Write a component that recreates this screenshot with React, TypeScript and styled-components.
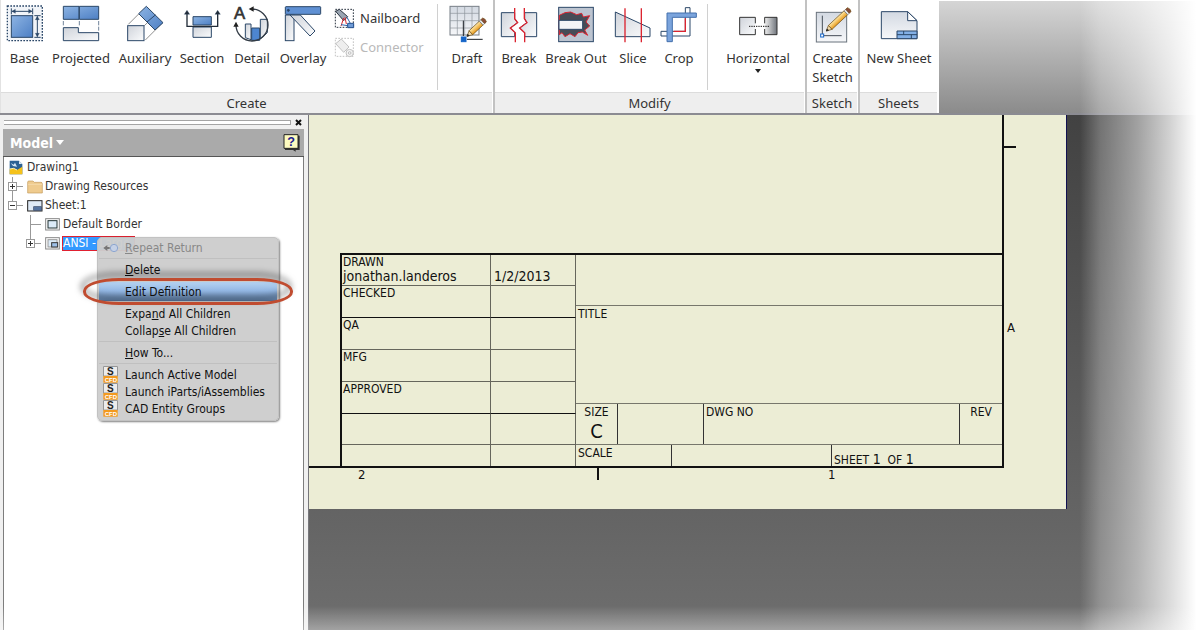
import React from 'react';
import styled, { createGlobalStyle } from 'styled-components';

const GlobalStyle = createGlobalStyle`
  *, *::before, *::after { box-sizing: border-box; }
  body { margin: 0; background: #fff; font-family: "Noto Sans", "Open Sans", sans-serif; color: #333; }
  button { font: inherit; color: inherit; background: none; border: 0; padding: 0; cursor: pointer; }
  svg { display: block; }
  ul { list-style: none; margin: 0; padding: 0; }
`;

const uiFont = '"DejaVu Sans Condensed", "Noto Sans", sans-serif';
const navy = '#2b4768';

/* ---------- page ---------- */

const Page = styled.div`
  position: relative;
  display: flex;
  flex-direction: column;
  min-height: 100vh;
  overflow: hidden;
`;

const FadeRight = styled.div`
  position: absolute;
  inset: 0 0 0 auto;
  width: 10%;
  pointer-events: none;
  background: linear-gradient(to right, rgba(255,255,255,0), rgba(255,255,255,.26) 17%, rgba(255,255,255,.5) 48%, rgba(255,255,255,.76) 75%, #fff 97%);
`;

const FadeBottom = styled.div`
  position: absolute;
  inset: auto 0 0 0;
  height: 24px;
  pointer-events: none;
  background: linear-gradient(to bottom, rgba(255,255,255,0), rgba(255,255,255,.36));
`;

/* ---------- ribbon ---------- */

const Ribbon = styled.header`
  display: flex;
  height: 115px;
  border-bottom: 2px solid #8b8b92;
  background: #fff;
`;

const Panel = styled.section<{ $width: number }>`
  display: flex;
  flex-direction: column;
  flex: none;
  width: ${p => p.$width}px;
  border-right: 2px solid #c2c2c2;
  &:first-of-type { border-left: 1px solid #e2e2e2; }
  &:last-of-type { border-right: 1px solid #fff; }
`;

const PanelBody = styled.div`
  display: flex;
  flex: 1;
  padding-top: 4px;
`;

const PanelTitle = styled.h2`
  margin: 0 1px 0 0;
  height: 21px;
  border-top: 1px solid #dcdcdc;
  background: #eee;
  font-size: 13px;
  font-weight: 400;
  line-height: 21px;
  text-align: center;
`;

const RibbonRest = styled.div`
  flex: 1;
  margin-top: 1px;
  background: linear-gradient(#d5d5d5, #8b8b8b);
`;

const Divider = styled.div`
  flex: none;
  width: 1px;
  height: 86px;
  margin: 0 3px 0 6px;
  background: #d0d0d0;
`;

const Tool = styled.button<{ $width: number }>`
  display: flex;
  flex-direction: column;
  align-items: center;
  flex: none;
  width: ${p => p.$width}px;
  font-size: 13px;
  line-height: 19px;
  white-space: nowrap;
  svg { margin-bottom: 5px; }
`;

const Caret = styled.span`
  border: 3px solid transparent;
  border-top: 4px solid #222;
  border-bottom: 0;
  margin-top: 1px;
`;

const SmallTools = styled.div`
  display: flex;
  flex-direction: column;
  flex: none;
  gap: 1px;
  width: 101px;
  padding-left: 4px;
`;

const SmallTool = styled.button`
  display: flex;
  align-items: center;
  gap: 5px;
  height: 28px;
  font-size: 13px;
  &:disabled { color: #b9b9b9; cursor: default; }
`;

/* ---------- browser panel ---------- */

const Workspace = styled.div`
  display: flex;
  flex: 1;
`;

const Sidebar = styled.aside`
  position: relative;
  display: flex;
  flex-direction: column;
  flex: none;
  width: 309px;
  padding: 0 3px;
  border-right: 1px solid #77777c;
  background: #f0f0f0;
  font-family: ${uiFont};
  font-size: 12px;
`;

const Grip = styled.div`
  display: flex;
  align-items: center;
  height: 14px;
  &::before {
    content: '';
    flex: 1;
    height: 5px;
    margin-left: 1px;
    border: solid #a5a5a5;
    border-width: 1px 1px 1px 0;
    background: #fff;
  }
`;

const CloseButton = styled.button`
  width: 14px;
  height: 14px;
  display: grid;
  place-items: center;
`;

const ModelBar = styled.div`
  display: flex;
  align-items: center;
  justify-content: space-between;
  height: 28px;
  margin-right: 1px;
  padding: 0 4px 0 7px;
  background: #aaa;
  border-bottom: 1px solid #555;
`;

const ModelPicker = styled.button`
  display: flex;
  align-items: center;
  gap: 3px;
  color: #fff;
  font-size: 14px;
  font-weight: 700;
  &::after {
    content: '';
    border: 4px solid transparent;
    border-top: 5px solid #fff;
    border-bottom: 0;
  }
`;

const Tree = styled.ul`
  flex: 1;
  margin-right: 1px;
  padding: 1px 0 0 4px;
  border: solid #7d7d7d;
  border-width: 0 1px;
  background: #fff;
`;

const Node = styled.li<{ $depth: number }>`
  display: flex;
  align-items: center;
  height: 19px;
  padding-left: ${p => p.$depth * 18}px;
`;

const IconSlot = styled.span`
  flex: none;
  width: 19px;
  padding-left: 1px;
`;

const NodeLabel = styled.span<{ $selected?: boolean }>`
  line-height: 15px;
  ${p => p.$selected && `
    margin-left: -1px;
    padding-right: 4px;
    line-height: 13px;
    border: 1px solid #e02030;
    background: #3399ff;
    color: #fff;
  `}
`;

/* ---------- context menu ---------- */

const Menu = styled.ul`
  position: absolute;
  left: 97px;
  top: 122px;
  width: 182px;
  padding: 1px 1px 3px;
  border: 1px solid #c2c2c2;
  border-radius: 5px;
  background: rgba(205, 205, 205, .96);
  box-shadow: 1px 1px 2px rgba(0, 0, 0, .5);
  color: #111;
`;

const MenuItem = styled.button<{ $active?: boolean }>`
  display: flex;
  align-items: center;
  width: 100%;
  height: 17px;
  text-align: left;
  white-space: nowrap;
  ${p => p.$active && 'background: linear-gradient(#b2d0f0, #94b8e4 45%, #6484ac); box-shadow: 0 -1px #b2d0f0, 0 1px #5a7aa2;'}
  &:disabled { color: #888; }
`;

const MenuIcon = styled.span`
  flex: none;
  width: 26px;
  padding-left: 4px;
`;

const Separator = styled.li`
  height: 1px;
  margin: 2px 0;
  background: #c0c0c0;
`;

const Callout = styled.div`
  position: absolute;
  left: 83px;
  top: 163px;
  width: 210px;
  height: 27px;
  border: 3px solid #c04c30;
  border-radius: 36px / 13px;
  filter: drop-shadow(-2px -5px 3px rgba(0, 0, 0, .55));
  pointer-events: none;
`;

/* ---------- drawing sheet ---------- */

const Viewport = styled.main`
  flex: 1;
  background: linear-gradient(#424242, #6e6e6e);
`;

const Sheet = styled.div`
  display: grid;
  grid-template: 353px 41px / 1fr 62px;
  margin-right: 133px;
  border-right: 1px solid #101050;
  background: #ecedd5;
  color: #111;
  font-family: ${uiFont};
  font-size: 12px;
  line-height: 12px;
`;

const Frame = styled.div`
  display: flex;
  align-items: flex-end;
  justify-content: flex-end;
  border: solid #111;
  border-width: 0 2px 2px 0;
`;

const ZonesRight = styled.div`
  display: flex;
  flex-direction: column;
  gap: 172px;
  padding-top: 31px;
`;

const ZonesBottom = styled.div`
  display: flex;
  justify-content: flex-end;
  padding-right: 168px;
`;

const Tick = styled.i<{ $vertical?: boolean }>`
  width: ${p => (p.$vertical ? 2 : 12)}px;
  height: ${p => (p.$vertical ? 12 : 2)}px;
  background: #111;
`;

const ZoneLabel = styled.span<{ $wide?: boolean }>`
  width: ${p => (p.$wide ? 239 : 8)}px;
  font-size: 13px;
  line-height: 14px;
  margin-left: ${p => (p.$wide ? 0 : 229)}px;
`;

const SideZoneLabel = styled.span`
  padding-left: 3px;
  font-size: 13px;
  line-height: 16px;
`;

const TitleBlock = styled.div`
  display: flex;
  width: 662px;
  height: 213px;
  border: solid #111;
  border-width: 2px 0 0 2px;
`;

const Approvals = styled.table`
  flex: none;
  width: 234px;
  height: 211px;
  table-layout: fixed;
  border-spacing: 0;
  td, th {
    height: 32px;
    padding: 1px 1px 0;
    border: 1px solid #66665c;
    border-width: 0 1px 1px 0;
    font-weight: 400;
    text-align: left;
    vertical-align: top;
    line-height: 12px;
    white-space: nowrap;
  }
  th { width: 149px; }
  tr:first-child > *, tr:nth-child(6) > * { height: 31px; }
  tr:last-child > * { height: 21px; border-bottom: 0; }
  tr:nth-child(2) > *, tr:nth-child(5) > * { border-bottom-color: #111; }
`;

const Value = styled.span`
  display: block;
  font-size: 14px;
  line-height: 16px;
`;

const DateCell = styled.td`
  && { padding: 13px 3px 0; }
`;

const Details = styled.div`
  display: grid;
  flex: 1;
  grid-template-rows: 51px 98px 41px 1fr;
`;

const DetailRow = styled.div<{ $columns?: string }>`
  display: grid;
  grid-template-columns: ${p => p.$columns || '1fr'};
  border-bottom: 1px solid #77776c;
  &:last-child { border-bottom: 0; }
`;

const Cell = styled.div<{ $center?: boolean; $low?: boolean }>`
  padding: ${p => (p.$low ? 8 : 2)}px 2px 0;
  border-right: 1px solid #333;
  text-align: ${p => (p.$center ? 'center' : 'left')};
  white-space: pre;
  &:last-child { border-right: 0; }
`;

const Digit = styled.span`
  font-size: 14px;
`;

const SizeLetter = styled.span`
  display: block;
  font-size: 20px;
  line-height: 26px;
`;

/* ---------- icons ---------- */

const Defs = () => (
  <svg width="0" height="0" style={{ position: 'absolute' }} aria-hidden="true">
    <defs>
      <linearGradient id="blue" x1="0" y1="0" x2="1" y2="1"><stop offset="0" stopColor="#8db4e3" /><stop offset="1" stopColor="#4d7fc4" /></linearGradient>
      <linearGradient id="grey" x1="0" y1="0" x2="1" y2="1"><stop offset="0" stopColor="#cfd3da" /><stop offset="1" stopColor="#fbfcfd" /></linearGradient>
      <linearGradient id="paper" x1="0" y1="0" x2="0" y2="1"><stop offset="0" stopColor="#d3d9e2" /><stop offset="1" stopColor="#f6f7f9" /></linearGradient>
      <linearGradient id="dark" x1="0" y1="0" x2="1" y2="0"><stop offset="0" stopColor="#f0f0f0" /><stop offset="1" stopColor="#6f747b" /></linearGradient>
      <linearGradient id="gold" x1="0" y1="0" x2="0" y2="1"><stop offset="0" stopColor="#ffe9a8" /><stop offset="1" stopColor="#e89a1c" /></linearGradient>
    </defs>
  </svg>
);

const Big = ({ x, w = 126, children }: { x: number; w?: number; children: React.ReactNode }) => (
  <svg viewBox={`${x} 12 ${w} 120`} width={w / 3} height={40} fill="none" stroke={navy} strokeWidth="3" aria-hidden="true">{children}</svg>
);

const Pencil = ({ x, y, len }: { x: number; y: number; len: number }) => (
  <g transform={`translate(${x} ${y}) rotate(-43)`} strokeWidth="2" stroke="#6b4a12">
    <path d="M0 0L16 -8V8Z" fill="#f3dcae" />
    <path d={`M16 -8H${len - 18}V8H16Z`} fill="url(#gold)" />
    <path d={`M${len - 18} -8h7v16h-7z`} fill="#e3e6ea" stroke="#777" />
    <path d={`M${len - 11} -8h7q5 8 0 16h-7z`} fill="#8c4a38" />
    <path d="M0 0L6 -3V3Z" fill="#222" stroke="#222" />
  </g>
);

const BaseIcon = () => (
  <Big x={12}>
    <rect x="22" y="18" width="105" height="104" strokeDasharray="5 4" strokeWidth="4" fill="#f1f4f8" />
    <rect x="34" y="47" width="64" height="65" fill="url(#blue)" />
    <path d="M34 25V43M98 25V43M36 34H96M103 47H122M103 112H122M112 49V110" />
    <path d="M36 34l10-6v12zM96 34l-10-6v12zM112 49l-6 10h12zM112 110l-6-10h12z" fill={navy} strokeWidth="1" />
  </Big>
);
const ProjectedIcon = () => (
  <Big x={180}>
    <path d="M190 19H237V58H190ZM238 19H296V58H238Z" fill="url(#blue)" />
    <path d="M190 63V80M238 63V80M296 63V92" strokeWidth="2" strokeDasharray="13 4" />
    <path d="M190 83H235V98H296V122H190Z" fill="url(#grey)" />
  </Big>
);
const AuxiliaryIcon = () => (
  <Big x={370}>
    <path d="M383 73L415 41M434 120L486 68M431 77L464 45" strokeWidth="2" stroke="#555" />
    <rect x="381" y="77" width="49" height="45" fill="url(#grey)" />
    <path d="M437 19L487 68L463 90L414 41ZM464 45L439 66" fill="url(#blue)" />
  </Big>
);
const SectionIcon = () => (
  <Big x={543}>
    <path d="M579 50H634V75H579Z" fill="url(#blue)" />
    <path d="M579 81H634V112H579Z" fill="url(#grey)" />
    <path d="M561 38V79H653V38" stroke="#222c38" strokeWidth="4" />
    <path d="M561 31l-8 12h16zM653 31l-8 12h16z" fill="#222c38" strokeWidth="1" />
  </Big>
);
const DetailIcon = () => (
  <Big x={694}>
    <path d="M737 72H754V119L737 113Z" fill="url(#grey)" />
    <path d="M756 84H780V121H756Z" fill="#4d86d0" />
    <path d="M782 58H803V98L782 117Z" fill="url(#grey)" />
    <path d="M757 27A48 48 0 1 1 709 75" stroke="#333c46" strokeWidth="4" />
    <path d="M747 27l15-8v16zM709 65l-8 15h16z" fill="#222" stroke="none" />
    <text x="703" y="57" fontSize="50" fill="#333" stroke="#333" strokeWidth="2" fontFamily="Liberation Sans, sans-serif">A</text>
  </Big>
);
const OverlayIcon = () => (
  <Big x={842}>
    <rect x="852" y="45" width="26" height="77" fill="url(#grey)" />
    <path d="M866 45H897L941 93L926 108Z" fill="url(#grey)" />
    <rect x="852" y="20" width="106" height="23" rx="2" fill="#5f90d3" />
    <circle cx="861" cy="31" r="3" fill={navy} />
  </Big>
);
const NailboardIcon = ({ off = false }: { off?: boolean }) => {
  const c = off ? '#c2c2c2' : '#2b3440';
  return (
    <svg viewBox="9 20 63 63" width="21" height="21" fill="none" stroke={c} strokeWidth="3" aria-hidden="true">
      <rect x="13" y="24" width="54" height="54" strokeDasharray="5 4" />
      {off ? (
        <>
          <path d="M14 40L31 26L54 50L38 66Z" fill="#eee" />
          <circle cx="56" cy="68" r="11" fill="#f4f4f4" /><circle cx="56" cy="68" r="4" />
        </>
      ) : (
        <>
          <path d="M14 30L25 24L50 46L38 58Z" fill="#9aa5b2" />
          <path d="M38 50L30 74M42 48L46 68" stroke="#d8262f" />
          <path d="M48 48L58 66M30 70L58 74" stroke="#2b5fa8" />
          <path d="M50 66H68V79H50Z" stroke="#24508f" fill="#6f9bd6" />
        </>
      )}
    </svg>
  );
};
const DraftIcon = () => (
  <Big x={349}>
    <rect x="361" y="19" width="87" height="86" fill="url(#paper)" stroke="#777e86" />
    <path d="M383 19V105M405 19V105M427 19V105M361 40H448M361 62H448M361 84H448" stroke="#8b9299" strokeWidth="2" />
    <path d="M401 62V108M412 118H459" stroke="#1b2026" />
    <rect x="395" y="111" width="14" height="14" fill="#1565c8" stroke="#1565c8" />
    <Pencil x={412} y={109} len={76} />
  </Big>
);
const BreakIcon = () => (
  <Big x={504}>
    <path d="M554 38H514V110H554V98L541 84L562 68L554 56Z" fill="url(#grey)" />
    <path d="M584 38H620V110H584V98L569 84L590 68L584 56Z" fill="url(#grey)" />
    <path d="M554 24V56L563 68L541 84L556 98V127M583 24V56L591 68L569 84L584 98V127" stroke="#dc2430" strokeWidth="4" />
  </Big>
);
const BreakOutIcon = () => (
  <Big x={675}>
    <rect x="686" y="22" width="104" height="103" fill="#bcc4d0" />
    <path d="M688 46L705 38L722 36L740 44L755 40L760 51L779 47L768 66L779 78L764 90L773 106L757 96L744 98L735 110L720 101L705 110L696 98L688 104Z" fill="#474c56" stroke="#dc2430" />
    <path d="M687 61H758V88H687Z" fill="#f3f5f8" />
  </Big>
);
const SliceIcon = () => (
  <Big x={848}>
    <path d="M858 36L962 84V110H858Z" fill="url(#grey)" />
    <path d="M887 25V127M936 25V127" stroke="#dc2430" strokeWidth="4" />
  </Big>
);
const CropIcon = () => (
  <Big x={55}>
    <path d="M137 23H151V108H64V94H137Z" fill="#fff" />
    <path d="M137 55V94H102" stroke="#dc2430" strokeWidth="4" />
    <path d="M82 39H170V52H98V125H82Z" fill="#7ba4dc" stroke="#4470ad" />
  </Big>
);
const HorizontalIcon = () => (
  <Big x={293}>
    <path d="M348 70V52H301V104H348V87" fill="url(#grey)" stroke="#333" />
    <path d="M376 70V52H413V104H376V87" fill="url(#dark)" stroke="#333" />
    <path d="M329 79H392" stroke="#111" strokeDasharray="4 3" />
  </Big>
);
const SketchIcon = () => (
  <Big x={513}>
    <rect x="526" y="37" width="91" height="89" fill="url(#paper)" stroke="#69727c" />
    <path d="M544 47V107H602" stroke="#454d57" />
    <rect x="539" y="102" width="9" height="9" fill="#fff" stroke="#1565c8" />
    <Pencil x={556} y={93} len={98} />
  </Big>
);
const NewSheetIcon = () => (
  <Big x={714}>
    <path d="M724 35H803L831 62V116H724Z" fill="url(#paper)" />
    <path d="M803 35V62H831Z" fill="#fff" />
    <path d="M771 93H831V116H771ZM771 104H831M791 93V104M814 104V116" fill="#83b0e6" />
  </Big>
);

const DrawingIcon = () => (
  <svg viewBox="0 0 42 45" width="14" height="15" aria-hidden="true">
    <path d="M2 2H30L40 12V43H2Z" fill="#2d6294" />
    <path d="M30 2V12H40Z" fill="#dce9f5" />
    <path d="M5 9L14 14L18 8L24 20L12 18Z" fill="#d7e8f6" />
    <path d="M2 27L14 25L24 30L40 20V43H2Z" fill="#f5c21b" />
    <path d="M2 27L14 25L24 30" fill="none" stroke="#fff3b8" strokeWidth="3" />
  </svg>
);
const FolderIcon = () => (
  <svg viewBox="0 0 48 42" width="16" height="14" stroke="#c39a5c" strokeWidth="2" aria-hidden="true">
    <path d="M2 6Q2 3 6 3H18L22 7H42Q46 7 46 11V39H2Z" fill="#efcb8e" />
    <path d="M3 13H45" stroke="#f8e2b8" />
  </svg>
);
const SheetIcon = () => (
  <svg viewBox="0 0 48 36" width="16" height="12" fill="#dfeaf6" stroke="#222" strokeWidth="3" aria-hidden="true">
    <rect x="2" y="2" width="43" height="31" /><rect x="20" y="20" width="23" height="11" fill="#5674a0" stroke="#3a4a66" strokeWidth="2" />
  </svg>
);
const BorderIcon = ({ block = false }: { block?: boolean }) => (
  <svg viewBox="0 0 45 39" width="15" height="13" fill="#fff" stroke="#888" strokeWidth="3" aria-hidden="true">
    <rect x="2" y="2" width="41" height="34" />
    <rect x="9" y="8" width="27" height="22" stroke={block ? '#999' : '#233'} fill="#dcebf8" />
    {block && <rect x="20" y="17" width="18" height="13" fill="#9dc0e8" stroke="#333" />}
  </svg>
);
const CfdIcon = () => (
  <svg viewBox="0 0 45 51" width="15" height="17" aria-hidden="true">
    <rect x="2" y="2" width="41" height="28" fill="#ececec" stroke="#777" strokeWidth="2" />
    <text x="12" y="26" fontSize="30" fontWeight="700" fontFamily="Liberation Sans, sans-serif" fill="#222">S</text>
    <rect x="1" y="30" width="43" height="20" fill="#f39a1f" />
    <text x="5" y="47" fontSize="18" fontWeight="700" fontFamily="Liberation Sans, sans-serif" fill="#fff">CFD</text>
  </svg>
);
const RepeatIcon = () => (
  <svg viewBox="0 0 48 30" width="16" height="10" aria-hidden="true">
    <path d="M1 15L13 6V12H20V18H13V24Z" fill="#777" />
    <circle cx="33" cy="15" r="11" fill="#c5d1e6" stroke="#8ea6cf" strokeWidth="3" />
  </svg>
);
const HelpIcon = () => (
  <svg viewBox="0 0 51 54" width="17" height="18" aria-hidden="true">
    <path d="M6 5H50V48H38V53L30 48H6Z" fill="#333" />
    <path d="M3 2H45V43H3Z" fill="#fdfbc0" stroke="#222" strokeWidth="3" />
    <text x="13" y="36" fontSize="38" fontWeight="700" fontFamily="Liberation Sans, sans-serif" fill="#1a1a90">?</text>
  </svg>
);

type GuideKind = 'plus' | 'minus' | 'leaf';
const GuideButton = styled.button`
  flex: none;
  width: 18px;
  height: 19px;
`;
const Guide = ({ kind, bottom, label }: { kind: GuideKind; bottom?: boolean; label?: string }) => {
  const art = (
    <svg width="18" height="19" fill="none" stroke="#999" aria-hidden="true" shapeRendering="crispEdges">
      <path d="M4.500 0V9" />
      {bottom && <path d="M4.500 9V19" />}
      <path d="M5 9.500H15" />
      {kind !== 'leaf' && <rect x="0.500" y="5.500" width="8" height="8" fill="#fff" />}
      {kind !== 'leaf' && <path d="M2 9.500H7" stroke="#333" />}
      {kind === 'plus' && <path d="M4.500 7V12" stroke="#333" />}
    </svg>
  );
  return kind === 'leaf' ? art : <GuideButton aria-label={label}>{art}</GuideButton>;
};

/* ---------- data ---------- */

const createTools = [
  { label: 'Base', width: 47, Icon: BaseIcon },
  { label: 'Projected', width: 66, Icon: ProjectedIcon },
  { label: 'Auxiliary', width: 62, Icon: AuxiliaryIcon },
  { label: 'Section', width: 52, Icon: SectionIcon },
  { label: 'Detail', width: 48, Icon: DetailIcon },
  { label: 'Overlay', width: 54, Icon: OverlayIcon },
];
const modifyTools = [
  { label: 'Break', width: 48, Icon: BreakIcon },
  { label: 'Break Out', width: 66, Icon: BreakOutIcon },
  { label: 'Slice', width: 48, Icon: SliceIcon },
  { label: 'Crop', width: 44, Icon: CropIcon },
];
const approvals = ['CHECKED', 'QA', 'MFG', 'APPROVED', '', ''];

export default function App() {
  return (
    <Page>
      <GlobalStyle />
      <Defs />
      <Ribbon>
        <Panel $width={495}>
          <PanelBody>
            {createTools.map(({ label, width, Icon }) => (
              <Tool key={label} $width={width}><Icon />{label}</Tool>
            ))}
            <SmallTools>
              <SmallTool><NailboardIcon />Nailboard</SmallTool>
              <SmallTool disabled><NailboardIcon off />Connector</SmallTool>
            </SmallTools>
            <Divider />
            <Tool $width={52}><DraftIcon />Draft</Tool>
          </PanelBody>
          <PanelTitle>Create</PanelTitle>
        </Panel>
        <Panel $width={312}>
          <PanelBody>
            {modifyTools.map(({ label, width, Icon }) => (
              <Tool key={label} $width={width}><Icon />{label}</Tool>
            ))}
            <Divider />
            <Tool $width={94}><HorizontalIcon />Horizontal<Caret /></Tool>
          </PanelBody>
          <PanelTitle>Modify</PanelTitle>
        </Panel>
        <Panel $width={53}>
          <PanelBody>
            <Tool $width={51}><SketchIcon /><span>Create<br />Sketch</span></Tool>
          </PanelBody>
          <PanelTitle>Sketch</PanelTitle>
        </Panel>
        <Panel $width={79}>
          <PanelBody>
            <Tool $width={78}><NewSheetIcon />New Sheet</Tool>
          </PanelBody>
          <PanelTitle>Sheets</PanelTitle>
        </Panel>
        <RibbonRest />
      </Ribbon>

      <Workspace>
        <Sidebar>
          <Grip>
            <CloseButton aria-label="Close">
              <svg width="7" height="7" stroke="#111" strokeWidth="2"><path d="M1 1L6 6M6 1L1 6" /></svg>
            </CloseButton>
          </Grip>
          <ModelBar>
            <ModelPicker>Model</ModelPicker>
            <button aria-label="Help"><HelpIcon /></button>
          </ModelBar>
          <Tree>
            <Node $depth={0}><IconSlot><DrawingIcon /></IconSlot><NodeLabel>Drawing1</NodeLabel></Node>
            <Node $depth={0}><Guide kind="plus" bottom label="Expand Drawing Resources" /><IconSlot><FolderIcon /></IconSlot><NodeLabel>Drawing Resources</NodeLabel></Node>
            <Node $depth={0}><Guide kind="minus" label="Collapse Sheet:1" /><IconSlot><SheetIcon /></IconSlot><NodeLabel>Sheet:1</NodeLabel></Node>
            <Node $depth={1}><Guide kind="leaf" bottom /><IconSlot><BorderIcon /></IconSlot><NodeLabel>Default Border</NodeLabel></Node>
            <Node $depth={1}><Guide kind="plus" label="Expand ANSI - Large" /><IconSlot><BorderIcon block /></IconSlot><NodeLabel $selected>ANSI - Large</NodeLabel></Node>
          </Tree>
          <Menu>
            <li><MenuItem disabled><MenuIcon><RepeatIcon /></MenuIcon><u>R</u>epeat Return</MenuItem></li>
            <Separator />
            <li><MenuItem><MenuIcon /><u>D</u>elete</MenuItem></li>
            <Separator />
            <li><MenuItem $active><MenuIcon />Edit Definition</MenuItem></li>
            <Separator />
            <li><MenuItem><MenuIcon />Expa<u>n</u>d All Children</MenuItem></li>
            <li><MenuItem><MenuIcon />Collap<u>s</u>e All Children</MenuItem></li>
            <Separator />
            <li><MenuItem><MenuIcon /><u>H</u>ow To...</MenuItem></li>
            <Separator />
            <li><MenuItem><MenuIcon><CfdIcon /></MenuIcon>Launch Active Model</MenuItem></li>
            <li><MenuItem><MenuIcon><CfdIcon /></MenuIcon>Launch iParts/iAssemblies</MenuItem></li>
            <li><MenuItem><MenuIcon><CfdIcon /></MenuIcon>CAD Entity Groups</MenuItem></li>
          </Menu>
          <Callout />
        </Sidebar>

        <Viewport>
          <Sheet>
            <Frame>
              <TitleBlock>
                <Approvals>
                  <tbody>
                    <tr><th scope="row">DRAWN<Value>jonathan.landeros</Value></th><DateCell><Value>1/2/2013</Value></DateCell></tr>
                    {approvals.map((name, i) => (
                      <tr key={i}><th scope="row">{name}</th><td /></tr>
                    ))}
                  </tbody>
                </Approvals>
                <Details>
                  <DetailRow />
                  <DetailRow><Cell>TITLE</Cell></DetailRow>
                  <DetailRow $columns="42px 86px 1fr 42px">
                    <Cell $center>SIZE<SizeLetter>C</SizeLetter></Cell>
                    <Cell />
                    <Cell>DWG NO</Cell>
                    <Cell $center>REV</Cell>
                  </DetailRow>
                  <DetailRow $columns="96px 160px 1fr">
                    <Cell>SCALE</Cell>
                    <Cell />
                    <Cell $low>SHEET <Digit>1</Digit>  OF <Digit>1</Digit></Cell>
                  </DetailRow>
                </Details>
              </TitleBlock>
            </Frame>
            <ZonesRight><Tick /><SideZoneLabel>A</SideZoneLabel></ZonesRight>
            <ZonesBottom><ZoneLabel $wide>2</ZoneLabel><Tick $vertical /><ZoneLabel>1</ZoneLabel></ZonesBottom>
          </Sheet>
        </Viewport>
      </Workspace>
      <FadeRight />
      <FadeBottom />
    </Page>
  );
}
